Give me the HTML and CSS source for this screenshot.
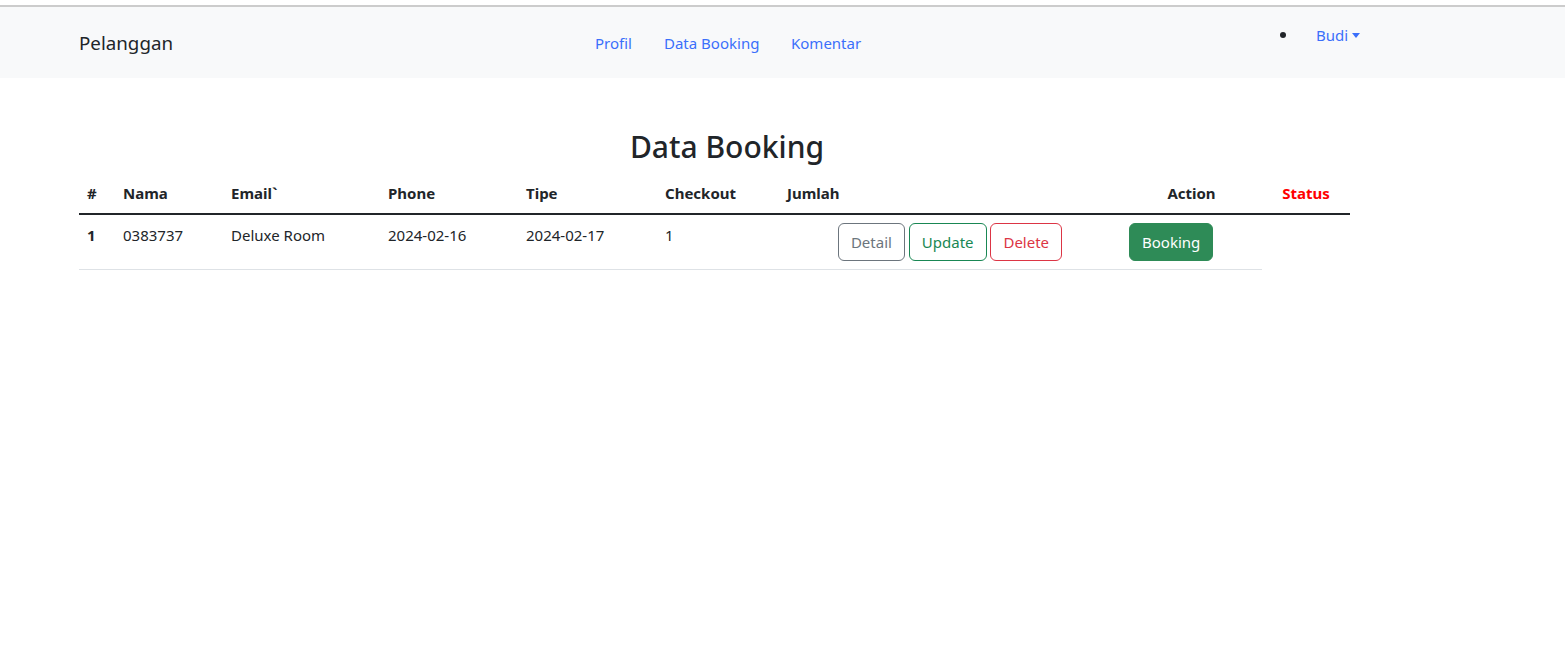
FILE: index.html
```html
<!DOCTYPE html>
<html lang="id">
<head>
<meta charset="utf-8">
<title>Data Booking</title>
<link rel="stylesheet" href="styles.css">
</head>
<body>
<div class="topline"></div>
<nav class="navbar">
  <a class="brand" href="#">Pelanggan</a>
  <div class="links">
    <a class="nav-link w-profil" href="#">Profil</a>
    <a class="nav-link w-data" href="#">Data Booking</a>
    <a class="nav-link" href="#">Komentar</a>
  </div>
  <div class="user">
    <span class="bullet"></span>
    <a class="user-link" href="#">Budi<span class="caret"></span></a>
  </div>
</nav>
<main class="container">
  <h2 class="title">Data Booking</h2>
  <table class="table">
    <colgroup>
      <col class="c1"><col class="c2"><col class="c3"><col class="c4"><col class="c5"><col class="c6"><col class="c7"><col class="c8"><col class="c9">
    </colgroup>
    <thead>
      <tr>
        <th>#</th>
        <th>Nama</th>
        <th>Email`</th>
        <th>Phone</th>
        <th>Tipe</th>
        <th>Checkout</th>
        <th>Jumlah</th>
        <th class="center">Action</th>
        <th class="center status">Status</th>
      </tr>
    </thead>
    <tbody>
      <tr>
        <th>1</th>
        <td>0383737</td>
        <td>Deluxe Room</td>
        <td>2024-02-16</td>
        <td>2024-02-17</td>
        <td>1</td>
        <td class="center">
          <a class="btn btn-outline-secondary" href="#">Detail</a>
          <a class="btn btn-outline-success" href="#">Update</a>
          <a class="btn btn-outline-danger" href="#">Delete</a>
        </td>
        <td><a class="btn btn-success" href="#">Booking</a></td>
      </tr>
    </tbody>
  </table>
</main>
</body>
</html>
```
FILE: styles.css
```css
* { box-sizing: border-box; }
html, body {
  margin: 0;
  padding: 0;
  background: #fff;
}
body {
  font-family: "Noto Sans", "Open Sans", "Liberation Sans", sans-serif;
  font-size: 15px;
  line-height: 24px;
  color: #212529;
}
a { text-decoration: none; }

.topline {
  height: 7px;
  border-bottom: 2px solid #cccccc;
}
.navbar {
  display: flex;
  align-items: center;
  height: 71px;
  padding: 8px 0 8px 79px;
  background: #f8f9fa;
}
.brand {
  width: 516px;
  font-size: 18.75px;
  line-height: 30px;
  color: #212529;
}
.links {
  display: flex;
  width: 685px;
}
.nav-link {
  color: #3b6ffa;
  line-height: 24px;
  padding: 8px 0;
}
.w-profil { width: 69px; }
.w-data { width: 127px; }
.user {
  align-self: flex-start;
  display: flex;
  align-items: center;
  padding: 8px 0;
}
.bullet {
  width: 6px;
  height: 6px;
  border-radius: 50%;
  background: #212529;
  margin-right: 30px;
}
.user-link {
  color: #3b6ffa;
  line-height: 24px;
}
.caret {
  display: inline-block;
  margin-left: 4px;
  vertical-align: 3px;
  border-top: 5px solid;
  border-left: 4.5px solid transparent;
  border-right: 4.5px solid transparent;
}

.container {
  width: 1296px;
  margin-left: 79px;
  padding-top: 50px;
}
.title {
  margin: 0 0 7px;
  text-align: center;
  font-size: 30px;
  font-weight: 500;
  line-height: 38px;
}
.table {
  width: 1271px;
  border-collapse: collapse;
  table-layout: fixed;
}
.c1 { width: 36px; }
.c2 { width: 108px; }
.c3 { width: 157px; }
.c4 { width: 138px; }
.c5 { width: 139px; }
.c6 { width: 122px; }
.c7 { width: 342px; }
.c8 { width: 141px; }
.c9 { width: 88px; }
.table th, .table td {
  padding: 8px;
  text-align: left;
  vertical-align: top;
  line-height: 24px;
  white-space: nowrap;
}
.table th { font-weight: 700; }
.table thead tr { border-bottom: 2px solid #212529; }
.table tbody th, .table tbody td { border-bottom: 1px solid #dee2e6; }
.table .center { text-align: center; }
.table .status { color: #ff0000; }

.btn {
  display: inline-block;
  padding: 6px 12px;
  font-size: 15px;
  line-height: 24px;
  border: 1px solid transparent;
  border-radius: 6px;
}
.btn-outline-secondary { color: #6c757d; border-color: #6c757d; }
.btn-outline-success { color: #198754; border-color: #198754; }
.btn-outline-danger { color: #dc3545; border-color: #dc3545; }
.btn-success { color: #fff; background: #2e8b57; border-color: #2e8b57; }
```
